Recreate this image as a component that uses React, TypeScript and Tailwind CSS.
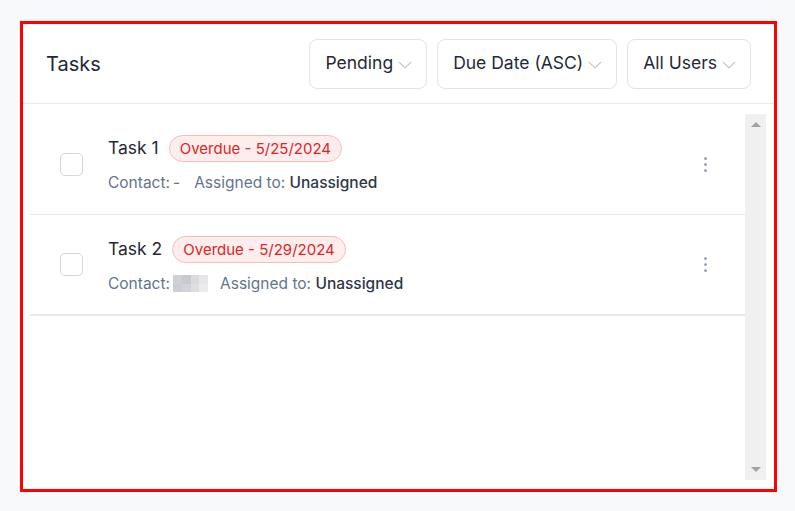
// Task list card: header with filter dropdowns, rows with overdue badges.
interface Task {
  id: number;
  title: string;
  due: string;
  contact: string | null;
  assignee: string;
}

const TASKS: Task[] = [
  { id: 1, title: 'Task 1', due: '5/25/2024', contact: null, assignee: 'Unassigned' },
  { id: 2, title: 'Task 2', due: '5/29/2024', contact: 'hidden', assignee: 'Unassigned' },
];

function Chevron() {
  return (
    <svg width="14" height="8" viewBox="0 0 14 8" fill="none" className="mt-[2px]">
      <polyline points="1,1 7,7 13,1" stroke="#c3c7cf" strokeWidth="1.2" />
    </svg>
  );
}

function Filter({ label }: { label: string }) {
  return (
    <button className="flex h-[50px] items-center gap-[5px] rounded-lg border border-[#e2e4e9] bg-white pl-[15px] pr-[14px] text-[17.5px] text-[#1f2937]">
      <span>{label}</span>
      <Chevron />
    </button>
  );
}

// pixelated placeholder where the contact name is blurred out
function Blurred() {
  const cells = ['#cfcfd6', '#c9c9d0', '#dadadf', '#e6e6ea', '#cdcdd4', '#d2d2d8', '#dedee2', '#ebebee'];
  return (
    <span className="inline-grid h-[17px] w-[35px] grid-cols-4 align-middle">
      {cells.map((c, i) => (
        <span key={i} style={{ backgroundColor: c }} />
      ))}
    </span>
  );
}

function Row({ task, last }: { task: Task; last: boolean }) {
  return (
    <div className={`flex h-[101px] items-center pl-[30px] pr-[38px] ${last ? 'border-b-2' : 'border-b'} border-[#e8e9ec]`}>
      <div className="h-[23px] w-[23px] rounded-[5px] border border-[#d3d6dd] bg-white" />
      <div className="ml-[25px] flex flex-1 flex-col gap-[11px]">
        <div className="flex items-center gap-[10px]">
          <span className="text-[17.5px] text-[#1f2937]">{task.title}</span>
          <span className="rounded-full border border-[#f6bcbc] bg-[#fdeded] px-[10px] py-[3px] text-[15px] leading-[19px] text-[#dc2626]">
            Overdue - {task.due}
          </span>
        </div>
        <div className="flex items-center text-[15.5px] leading-[20px] text-[#64748b]">
          <span className="flex items-center gap-[3px]">
            Contact: {task.contact ? <Blurred /> : <span>-</span>}
          </span>
          <span className={task.contact ? 'ml-[12px]' : 'ml-[14px]'}>
            Assigned to: <span className="font-medium text-[#2d3748]">{task.assignee}</span>
          </span>
        </div>
      </div>
      <div className="flex flex-col gap-[3px]">
        {[0, 1, 2].map((i) => (
          <span key={i} className="h-[3px] w-[3px] rounded-full bg-[#9ca3b4]" />
        ))}
      </div>
    </div>
  );
}

export default function App() {
  return (
    <div className="min-h-screen bg-[#f8f9fb] px-[20px] pt-[21px]" style={{ fontFamily: 'Inter, "Noto Sans", sans-serif' }}>
      <div className="flex h-[471px] w-[757px] flex-col border-[3px] border-[#ff0000] bg-white">
        <div className="flex h-[80px] items-center justify-between border-b border-[#e8e9ec] pl-[23px] pr-[23px]">
          <h2 className="text-[20px] text-[#1f2937]">Tasks</h2>
          <div className="flex gap-[10px]">
            <Filter label="Pending" />
            <Filter label="Due Date (ASC)" />
            <Filter label="All Users" />
          </div>
        </div>
        <div className="flex flex-1 pb-[9px] pl-[7px] pr-[8px] pt-[10px]">
          <div className="flex-1">
            {TASKS.map((t, i) => (
              <Row key={t.id} task={t} last={i === TASKS.length - 1} />
            ))}
          </div>
          <div className="flex w-[21px] flex-col items-center justify-between bg-[#f0f0f0] py-[8px]">
            <span className="h-0 w-0 border-x-[5px] border-b-[5px] border-x-transparent border-b-[#a3a3a3]" />
            <span className="h-0 w-0 border-x-[5px] border-t-[5px] border-x-transparent border-t-[#a3a3a3]" />
          </div>
        </div>
      </div>
    </div>
  );
}
